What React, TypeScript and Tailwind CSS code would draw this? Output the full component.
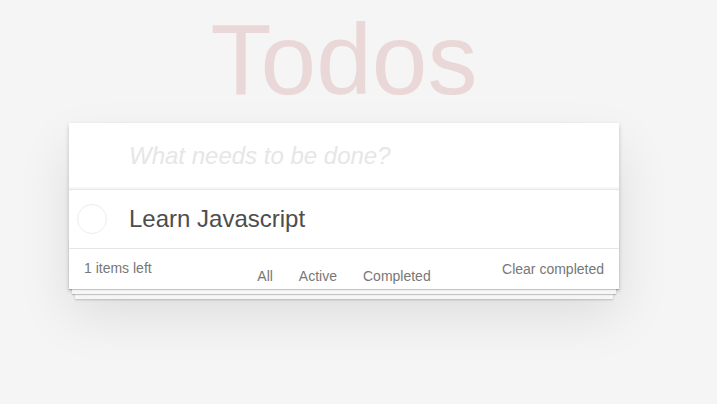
export default function App() {
  return (
    <div className="min-h-screen bg-[#f5f5f5] font-['Liberation_Sans',Arial,sans-serif] text-[14px] leading-[1.4em] text-[#4d4d4d]">
      <div className="ml-[69px] w-[550px]">
        {/* Title */}
        <h1 className="pt-[9px] mb-[14px] text-center text-[100px] leading-[100px] font-thin text-[rgba(175,47,47,0.15)]">
          Todos
        </h1>

        {/* App card */}
        <section className="relative bg-white shadow-[0_2px_4px_0_rgba(0,0,0,0.2),0_25px_50px_0_rgba(0,0,0,0.1)]">
          <header>
            <input
              className="w-full py-4 pr-4 pl-[60px] text-[24px] leading-[1.4em] bg-transparent outline-none shadow-[inset_0_-2px_1px_rgba(0,0,0,0.03)] placeholder:italic placeholder:text-[#e6e6e6]"
              placeholder="What needs to be done?"
            />
          </header>

          {/* Todo list */}
          <section className="border-t border-[#e6e6e6]">
            <ul>
              <li className="flex items-center">
                <div className="ml-[8px] w-[30px] h-[30px] rounded-full border border-[#ededed]" />
                <label className="ml-[22px] py-[15px] pr-[15px] text-[24px] leading-[1.2] text-[#4d4d4d]">
                  Learn Javascript
                </label>
              </li>
            </ul>
          </section>

          {/* Footer */}
          <footer className="relative grid grid-cols-[1fr_auto_1fr] h-[41px] px-[15px] py-[10px] border-t border-[#e6e6e6] text-[#777]">
            <div className="absolute left-0 right-0 bottom-0 h-[50px] overflow-hidden pointer-events-none shadow-[0_1px_1px_rgba(0,0,0,0.2),0_8px_0_-3px_#f6f6f6,0_9px_1px_-3px_rgba(0,0,0,0.2),0_16px_0_-6px_#f6f6f6,0_17px_2px_-6px_rgba(0,0,0,0.2)]" />
            <span className="relative justify-self-start leading-[19.6px]">1 items left</span>
            <ul className="relative flex gap-[4px] pt-[8px]">
              <li>
                <a className="mx-[3px] px-[7px] border border-transparent leading-[19.6px]" href="#/">
                  All
                </a>
              </li>
              <li>
                <a className="mx-[3px] px-[7px] border border-transparent leading-[19.6px]" href="#/active">
                  Active
                </a>
              </li>
              <li>
                <a className="mx-[3px] px-[7px] border border-transparent leading-[19.6px]" href="#/completed">
                  Completed
                </a>
              </li>
            </ul>
            <button className="relative justify-self-end self-start mt-[1px] leading-[19.6px] text-[#777]">
              Clear completed
            </button>
          </footer>
        </section>
      </div>
    </div>
  );
}
